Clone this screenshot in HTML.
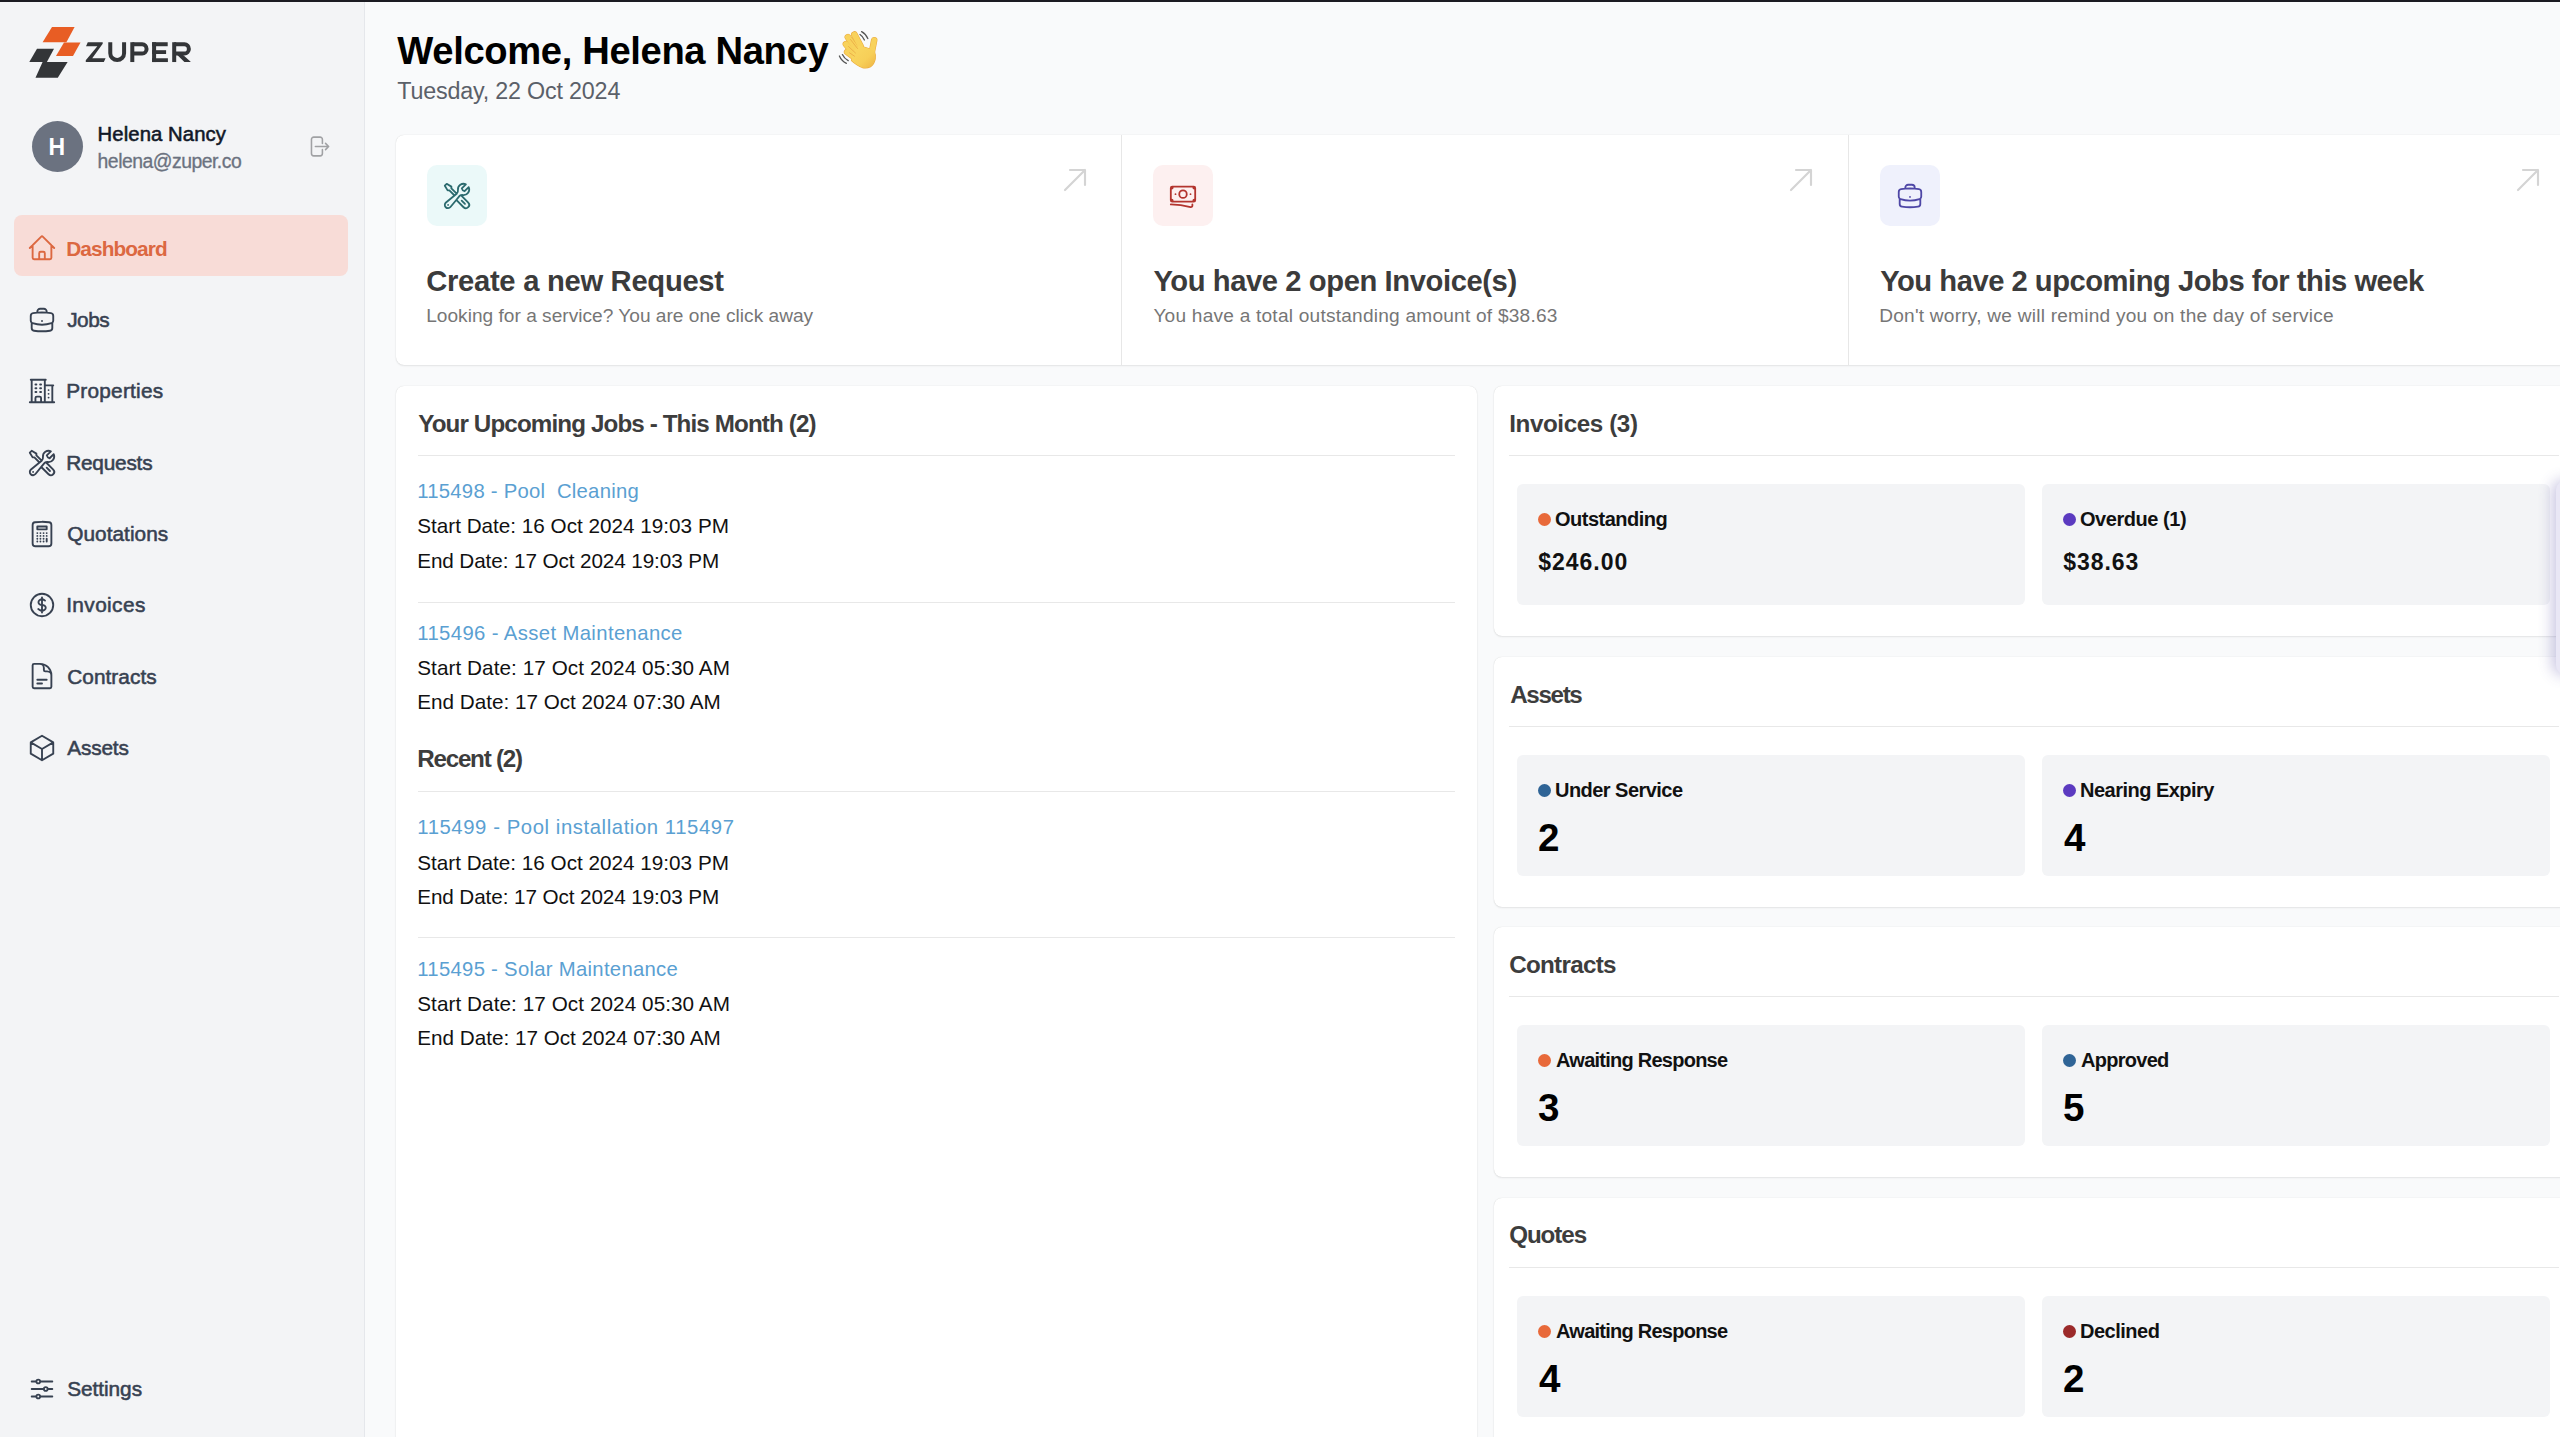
<!DOCTYPE html>
<html><head><meta charset="utf-8"><style>
html,body{margin:0;padding:0;width:2560px;height:1437px;overflow:hidden;background:#f9fafb}
.t{position:absolute;white-space:pre;line-height:1;font-family:"Liberation Sans", sans-serif}
svg{display:block}
</style></head><body>
<div style="position:absolute;left:0px;top:0px;width:2560px;height:2px;background:#1b1b22"></div>
<div style="position:absolute;left:0px;top:2px;width:364px;height:1435px;background:#f3f4f6"></div>
<div style="position:absolute;left:364px;top:2px;width:1px;height:1435px;background:#e5e7eb"></div>
<svg style="position:absolute;left:0;top:0" width="200" height="90" viewBox="0 0 200 90">
<polygon points="52,27 74.6,27 66.4,42.2 42.6,42.2" fill="#e85d24"/>
<polygon points="64,42.6 80.5,42.6 73,55.9 56,55.9" fill="#e85d24"/>
<polygon points="37,48.8 54,48.8 46.9,62 29.3,62" fill="#333538"/>
<polygon points="42.6,62 67.6,62 57.8,77.7 35.5,77.7" fill="#333538"/>
</svg>
<svg style="position:absolute;left:0;top:0" width="200" height="90" viewBox="0 0 200 90">
<g fill="#333538">
<polygon points="87.79,42.23 102.7,42.23 102.7,43.79 92.24,58.26 105.6,58.26 103.82,62.04 85.78,62.04 85.78,60.26 97.36,46.24 86.01,46.24"/>
<rect x="130.3" y="42.23" width="4" height="19.81"/>
<rect x="152.1" y="42.23" width="4" height="19.81"/>
<rect x="152.1" y="42.23" width="15.6" height="4"/>
<rect x="152.1" y="50.2" width="14" height="3.8"/>
<rect x="152.1" y="58.26" width="15.8" height="3.78"/>
<rect x="172.2" y="42.23" width="4" height="19.81"/>
<polygon points="176.8,54.5 182.6,54.5 190.9,62.04 184.4,62.04"/>
</g>
<g fill="none" stroke="#333538" stroke-width="4">
<path d="M110.27 42.23 V53.14 A6.9 6.9 0 0 0 124.08 53.14 V42.23"/>
<path d="M132.3 44.23 H142.1 A4.69 4.69 0 0 1 142.1 53.6 H132.3"/>
<path d="M174.2 44.23 H184.4 A4.69 4.69 0 0 1 184.4 53.6 H174.2"/>
</g></svg>
<div style="position:absolute;left:32px;top:121px;width:51px;height:51px;background:#6b7280;border-radius:50%"></div>
<div class="t" style="left:48.40px;top:136.00px;font-size:23px;font-weight:700;color:#fff;letter-spacing:0.000px;">H</div>
<div class="t" style="left:97.60px;top:124.00px;font-size:20.3px;font-weight:400;color:#111827;letter-spacing:0.082px;-webkit-text-stroke:0.55px currentColor;">Helena Nancy</div>
<div class="t" style="left:97.60px;top:152.00px;font-size:19.4px;font-weight:400;color:#6b7280;letter-spacing:-0.507px;-webkit-text-stroke:0.3px currentColor;">helena@zuper.co</div>
<svg style="position:absolute;left:305.9px;top:133.8px;" width="25" height="25" viewBox="0 0 24 24" fill="none" stroke="#a0a1a4" stroke-width="1.5" stroke-linecap="round" stroke-linejoin="round"><path d="M15.75 9V5.25A2.25 2.25 0 0 0 13.5 3h-6a2.25 2.25 0 0 0-2.25 2.25v13.5A2.25 2.25 0 0 0 7.5 21h6a2.25 2.25 0 0 0 2.25-2.25V15m3 0 3-3m0 0-3-3m3 3H9"/></svg>
<div style="position:absolute;left:14px;top:215px;width:334px;height:61px;background:#f8dcd7;border-radius:8px"></div>
<svg style="position:absolute;left:27px;top:233.3px;" width="30" height="30" viewBox="0 0 24 24" fill="none" stroke="#dc6841" stroke-width="1.5" stroke-linecap="round" stroke-linejoin="round"><path d="m2.25 12 8.954-8.955c.44-.439 1.152-.439 1.591 0L21.75 12M4.5 9.75v10.125c0 .621.504 1.125 1.125 1.125H9.75v-4.875c0-.621.504-1.125 1.125-1.125h2.25c.621 0 1.125.504 1.125 1.125V21h4.125c.621 0 1.125-.504 1.125-1.125V9.75M8.25 21h8.25"/></svg>
<div class="t" style="left:66.20px;top:239.00px;font-size:20.8px;font-weight:700;color:#dc6841;letter-spacing:-0.900px;">Dashboard</div>
<svg style="position:absolute;left:27px;top:304.9px;" width="30" height="30" viewBox="0 0 24 24" fill="none" stroke="#374151" stroke-width="1.5" stroke-linecap="round" stroke-linejoin="round"><path d="M20.25 14.15v4.25c0 1.094-.787 2.036-1.872 2.18-2.087.277-4.216.42-6.378.42s-4.291-.143-6.378-.42c-1.085-.144-1.872-1.086-1.872-2.18v-4.25m16.5 0a2.18 2.18 0 0 0 .75-1.661V8.706c0-1.081-.768-2.015-1.837-2.175a48.114 48.114 0 0 0-3.413-.387m4.5 8.006c-.194.165-.42.295-.673.38A23.978 23.978 0 0 1 12 15.75c-2.648 0-5.195-.429-7.577-1.22a2.016 2.016 0 0 1-.673-.38m0 0A2.18 2.18 0 0 1 3 12.489V8.706c0-1.081.768-2.015 1.837-2.175a48.111 48.111 0 0 1 3.413-.387m7.5 0V5.25A2.25 2.25 0 0 0 13.5 3h-3a2.25 2.25 0 0 0-2.25 2.25v.894m7.5 0a48.667 48.667 0 0 0-7.5 0M12 12.75h.008v.008H12v-.008Z"/></svg>
<div class="t" style="left:67.20px;top:310.00px;font-size:20.8px;font-weight:400;color:#374151;letter-spacing:-0.467px;-webkit-text-stroke:0.55px currentColor;">Jobs</div>
<svg style="position:absolute;left:27px;top:376.2px;" width="30" height="30" viewBox="0 0 24 24" fill="none" stroke="#374151" stroke-width="1.5" stroke-linecap="round" stroke-linejoin="round"><path d="M2.25 21h19.5m-18-18v18m10.5-18v18m6-13.5V21M6.75 6.75h.75m-.75 3h.75m-.75 3h.75m3-6h.75m-.75 3h.75m-.75 3h.75M6.75 21v-3.375c0-.621.504-1.125 1.125-1.125h2.25c.621 0 1.125.504 1.125 1.125V21M3 3h12m-.75 4.5H21m-3.75 3.75h.008v.008h-.008v-.008Zm0 3h.008v.008h-.008v-.008Zm0 3h.008v.008h-.008v-.008Z"/></svg>
<div class="t" style="left:66.20px;top:381.00px;font-size:20.8px;font-weight:400;color:#374151;letter-spacing:0.244px;-webkit-text-stroke:0.55px currentColor;">Properties</div>
<svg style="position:absolute;left:27px;top:447.5px;" width="30" height="30" viewBox="0 0 24 24" fill="none" stroke="#374151" stroke-width="1.5" stroke-linecap="round" stroke-linejoin="round"><path d="M11.42 15.17 17.25 21A2.652 2.652 0 0 0 21 17.25l-5.877-5.877M11.42 15.17l2.496-3.03c.317-.384.74-.626 1.208-.766M11.42 15.17l-4.655 5.653a2.548 2.548 0 1 1-3.586-3.586l6.837-5.63m5.108-.233c.55-.164 1.163-.188 1.743-.14a4.5 4.5 0 0 0 4.486-6.336l-3.276 3.277a3.004 3.004 0 0 1-2.25-2.25l3.276-3.276a4.5 4.5 0 0 0-6.336 4.486c.091 1.076-.071 2.264-.904 2.95l-.102.085m-1.745 1.437L5.909 7.5H4.5L2.25 3.75l1.5-1.5L7.5 4.5v1.409l4.26 4.26m-1.745 1.437 1.745-1.437m6.615 8.206L15.75 15.75M4.867 19.125h.008v.008h-.008v-.008Z"/></svg>
<div class="t" style="left:66.20px;top:453.00px;font-size:20.8px;font-weight:400;color:#374151;letter-spacing:-0.214px;-webkit-text-stroke:0.55px currentColor;">Requests</div>
<svg style="position:absolute;left:27px;top:518.8px;" width="30" height="30" viewBox="0 0 24 24" fill="none" stroke="#374151" stroke-width="1.5" stroke-linecap="round" stroke-linejoin="round"><path d="M15.75 15.75V18m-7.5-6.75h.008v.008H8.25v-.008Zm0 2.25h.008v.008H8.25V13.5Zm0 2.25h.008v.008H8.25v-.008Zm0 2.25h.008v.008H8.25V18Zm2.498-6.75h.007v.008h-.007v-.008Zm0 2.25h.007v.008h-.007V13.5Zm0 2.25h.007v.008h-.007v-.008Zm0 2.25h.007v.008h-.007V18Zm2.504-6.75h.008v.008h-.008v-.008Zm0 2.25h.008v.008h-.008V13.5Zm0 2.25h.008v.008h-.008v-.008Zm0 2.25h.008v.008h-.008V18Zm2.498-6.75h.008v.008h-.008v-.008Zm0 2.25h.008v.008h-.008V13.5ZM8.25 6h7.5v2.25h-7.5V6ZM12 2.25c-1.892 0-3.758.11-5.593.322C5.307 2.7 4.5 3.65 4.5 4.757V19.5a2.25 2.25 0 0 0 2.25 2.25h10.5a2.25 2.25 0 0 0 2.25-2.25V4.757c0-1.108-.806-2.057-1.907-2.185A48.507 48.507 0 0 0 12 2.25Z"/></svg>
<div class="t" style="left:67.20px;top:524.00px;font-size:20.8px;font-weight:400;color:#374151;letter-spacing:0.044px;-webkit-text-stroke:0.55px currentColor;">Quotations</div>
<svg style="position:absolute;left:27px;top:590.1px;" width="30" height="30" viewBox="0 0 24 24" fill="none" stroke="#374151" stroke-width="1.5" stroke-linecap="round" stroke-linejoin="round"><path d="M12 6v12m-3-2.818.879.659c1.171.879 3.07.879 4.242 0 1.172-.879 1.172-2.303 0-3.182C13.536 12.219 12.768 12 12 12c-.725 0-1.45-.22-2.003-.659-1.106-.879-1.106-2.303 0-3.182s2.9-.879 4.006 0l.415.33M21 12a9 9 0 1 1-18 0 9 9 0 0 1 18 0Z"/></svg>
<div class="t" style="left:66.20px;top:595.00px;font-size:20.8px;font-weight:400;color:#374151;letter-spacing:0.400px;-webkit-text-stroke:0.55px currentColor;">Invoices</div>
<svg style="position:absolute;left:27px;top:661.4px;" width="30" height="30" viewBox="0 0 24 24" fill="none" stroke="#374151" stroke-width="1.5" stroke-linecap="round" stroke-linejoin="round"><path d="M19.5 14.25v-2.625a3.375 3.375 0 0 0-3.375-3.375h-1.5A1.125 1.125 0 0 1 13.5 7.125v-1.5a3.375 3.375 0 0 0-3.375-3.375H8.25m0 12.75h7.5m-7.5 3H12M10.5 2.25H5.625c-.621 0-1.125.504-1.125 1.125v17.25c0 .621.504 1.125 1.125 1.125h12.75c.621 0 1.125-.504 1.125-1.125V11.25a9 9 0 0 0-9-9Z"/></svg>
<div class="t" style="left:67.20px;top:667.00px;font-size:20.8px;font-weight:400;color:#374151;letter-spacing:0.062px;-webkit-text-stroke:0.55px currentColor;">Contracts</div>
<svg style="position:absolute;left:27px;top:732.7px;" width="30" height="30" viewBox="0 0 24 24" fill="none" stroke="#374151" stroke-width="1.5" stroke-linecap="round" stroke-linejoin="round"><path d="m21 7.5-9-5.25L3 7.5m18 0-9 5.25m9-5.25v9l-9 5.25M3 7.5l9 5.25M3 7.5v9l9 5.25m0-9v9"/></svg>
<div class="t" style="left:67.20px;top:738.00px;font-size:20.8px;font-weight:400;color:#374151;letter-spacing:-0.140px;-webkit-text-stroke:0.55px currentColor;">Assets</div>
<svg style="position:absolute;left:27px;top:1374px;" width="30" height="30" viewBox="0 0 24 24" fill="none" stroke="#374151" stroke-width="1.5" stroke-linecap="round" stroke-linejoin="round"><path d="M10.5 6h9.75M10.5 6a1.5 1.5 0 1 1-3 0m3 0a1.5 1.5 0 1 0-3 0M3.75 6H7.5m3 12h9.75m-9.75 0a1.5 1.5 0 0 1-3 0m3 0a1.5 1.5 0 0 0-3 0m-3.75 0H7.5m9-6h3.75m-3.75 0a1.5 1.5 0 0 1-3 0m3 0a1.5 1.5 0 0 0-3 0m-9.75 0h9.75"/></svg>
<div class="t" style="left:67.20px;top:1379.00px;font-size:20.8px;font-weight:400;color:#374151;letter-spacing:-0.043px;-webkit-text-stroke:0.55px currentColor;">Settings</div>
<div style="position:absolute;left:365px;top:2px;width:2195px;height:1435px;background:#f9fafb"></div>
<div class="t" style="left:397.30px;top:32.00px;font-size:38.2px;font-weight:700;color:#000;letter-spacing:-0.365px;">Welcome, Helena Nancy</div>
<svg style="position:absolute;left:826px;top:24px" width="60" height="52" viewBox="0 0 60 52">
<defs><linearGradient id="hg" x1="0" y1="0" x2="1" y2="1"><stop offset="0" stop-color="#f9d862"/><stop offset="0.6" stop-color="#f7cf58"/><stop offset="1" stop-color="#eeb444"/></linearGradient></defs>
<g stroke="#eaa93e" stroke-linecap="round"><line x1="34.6" y1="22.3" x2="28.4" y2="10.6" stroke-width="6.699999999999999"/><line x1="31.2" y1="26.5" x2="21.9" y2="13.2" stroke-width="6.699999999999999"/><line x1="29.2" y1="31.4" x2="20.0" y2="20.2" stroke-width="6.699999999999999"/><line x1="28.3" y1="33.5" x2="21.0" y2="28.0" stroke-width="6.300000000000001"/><line x1="45.6" y1="29.5" x2="48.2" y2="16.2" stroke-width="6.5"/></g>
<path d="M33,21.5 L44,25 L48.3,27 Q49.8,31 49.2,35 Q48.4,40 44.5,42.8 Q40.5,44.6 36.5,43.6 Q31.5,41.8 25.5,36.5 L27,28 Z" fill="#f7cf58" stroke="#eaa93e" stroke-width="1.1"/>
<g stroke="#f8d25c" stroke-linecap="round"><line x1="34.6" y1="22.3" x2="28.4" y2="10.6" stroke-width="5.6"/><line x1="31.2" y1="26.5" x2="21.9" y2="13.2" stroke-width="5.6"/><line x1="29.2" y1="31.4" x2="20.0" y2="20.2" stroke-width="5.6"/><line x1="28.3" y1="33.5" x2="21.0" y2="28.0" stroke-width="5.2"/><line x1="45.6" y1="29.5" x2="48.2" y2="16.2" stroke-width="5.4"/></g>
<path d="M33,21.5 L44,25 L48.3,27 Q49.8,31 49.2,35 Q48.4,40 44.5,42.8 Q40.5,44.6 36.5,43.6 Q31.5,41.8 25.5,36.5 L27,28 Z" fill="url(#hg)"/>
<g stroke="#e9a842" stroke-width="0.8" fill="none" stroke-linecap="round">
<path d="M24.5,15.5 L31.5,24.5"/><path d="M22.5,22.5 L29.5,29"/><path d="M23.5,28.8 L28.5,32.2"/>
</g>
<g fill="none" stroke="#555" stroke-width="1.3" stroke-linecap="round">
<path d="M35.6,7.6 Q39.8,9.8 41.8,14.6"/><path d="M34,10.5 Q37,12.4 38.4,16"/>
<path d="M13.4,32 Q15.4,36.8 20.4,39.3"/><path d="M16.4,30.6 Q18.2,34.6 22.2,36.6"/>
</g></svg>
<div class="t" style="left:397.30px;top:80.00px;font-size:23.3px;font-weight:400;color:#5b6069;letter-spacing:-0.189px;">Tuesday, 22 Oct 2024</div>
<div style="position:absolute;left:396px;top:135px;width:2200px;height:230px;background:#fff;border-radius:8px;box-shadow:0 1px 2px rgba(0,0,0,0.08), 0 0 1px rgba(0,0,0,0.16)"></div>
<div style="position:absolute;left:1121px;top:135px;width:1px;height:230px;background:#e7e7e7"></div>
<div style="position:absolute;left:1848px;top:135px;width:1px;height:230px;background:#e7e7e7"></div>
<div style="position:absolute;left:427px;top:165px;width:60px;height:61px;background:#ebf9f9;border-radius:10px"></div>
<svg style="position:absolute;left:442px;top:181px;" width="30" height="30" viewBox="0 0 24 24" fill="none" stroke="#2b6a6e" stroke-width="1.45" stroke-linecap="round" stroke-linejoin="round"><path d="M11.42 15.17 17.25 21A2.652 2.652 0 0 0 21 17.25l-5.877-5.877M11.42 15.17l2.496-3.03c.317-.384.74-.626 1.208-.766M11.42 15.17l-4.655 5.653a2.548 2.548 0 1 1-3.586-3.586l6.837-5.63m5.108-.233c.55-.164 1.163-.188 1.743-.14a4.5 4.5 0 0 0 4.486-6.336l-3.276 3.277a3.004 3.004 0 0 1-2.25-2.25l3.276-3.276a4.5 4.5 0 0 0-6.336 4.486c.091 1.076-.071 2.264-.904 2.95l-.102.085m-1.745 1.437L5.909 7.5H4.5L2.25 3.75l1.5-1.5L7.5 4.5v1.409l4.26 4.26m-1.745 1.437 1.745-1.437m6.615 8.206L15.75 15.75M4.867 19.125h.008v.008h-.008v-.008Z"/></svg>
<div class="t" style="left:426.20px;top:267.00px;font-size:29.2px;font-weight:700;color:#3b3b3b;letter-spacing:-0.289px;">Create a new Request</div>
<div class="t" style="left:426.20px;top:306.00px;font-size:19.1px;font-weight:400;color:#767676;letter-spacing:0.014px;">Looking for a service? You are one click away</div>
<svg style="position:absolute;left:1059px;top:164.4px;" width="32" height="32" viewBox="0 0 24 24" fill="none" stroke="#d4d4d4" stroke-width="1.6" stroke-linecap="round" stroke-linejoin="round"><path d="m4.5 19.5 15-15m0 0H8.25m11.25 0v11.25"/></svg>
<div style="position:absolute;left:1153px;top:165px;width:60px;height:61px;background:#fdf0f0;border-radius:10px"></div>
<svg style="position:absolute;left:1168px;top:181px;" width="30" height="30" viewBox="0 0 24 24" fill="none" stroke="#b3342e" stroke-width="1.45" stroke-linecap="round" stroke-linejoin="round"><path d="M2.25 18.75a60.07 60.07 0 0 1 15.797 2.101c.727.198 1.453-.342 1.453-1.096V18.75M3.75 4.5v.75A.75.75 0 0 1 3 6h-.75m0 0v-.375c0-.621.504-1.125 1.125-1.125H20.25M2.25 6v9m18-10.5v.75c0 .414.336.75.75.75h.75m-1.5-1.5h.375c.621 0 1.125.504 1.125 1.125v9.75c0 .621-.504 1.125-1.125 1.125h-.375m1.5-1.5H21a.75.75 0 0 0-.75.75v.75m0 0H3.75m0 0h-.375a1.125 1.125 0 0 1-1.125-1.125V15m1.5 1.5v-.75A.75.75 0 0 0 3 15h-.75M15 10.5a3 3 0 1 1-6 0 3 3 0 0 1 6 0Zm3 0h.008v.008H18V10.5Zm-12 0h.008v.008H6V10.5Z"/></svg>
<div class="t" style="left:1153.40px;top:267.00px;font-size:29.2px;font-weight:700;color:#3b3b3b;letter-spacing:-0.416px;">You have 2 open Invoice(s)</div>
<div class="t" style="left:1153.40px;top:306.00px;font-size:19.1px;font-weight:400;color:#767676;letter-spacing:0.223px;">You have a total outstanding amount of $38.63</div>
<svg style="position:absolute;left:1785px;top:164.4px;" width="32" height="32" viewBox="0 0 24 24" fill="none" stroke="#d4d4d4" stroke-width="1.6" stroke-linecap="round" stroke-linejoin="round"><path d="m4.5 19.5 15-15m0 0H8.25m11.25 0v11.25"/></svg>
<div style="position:absolute;left:1880px;top:165px;width:60px;height:61px;background:#eff1fc;border-radius:10px"></div>
<svg style="position:absolute;left:1895px;top:181px;" width="30" height="30" viewBox="0 0 24 24" fill="none" stroke="#4e47a6" stroke-width="1.45" stroke-linecap="round" stroke-linejoin="round"><path d="M20.25 14.15v4.25c0 1.094-.787 2.036-1.872 2.18-2.087.277-4.216.42-6.378.42s-4.291-.143-6.378-.42c-1.085-.144-1.872-1.086-1.872-2.18v-4.25m16.5 0a2.18 2.18 0 0 0 .75-1.661V8.706c0-1.081-.768-2.015-1.837-2.175a48.114 48.114 0 0 0-3.413-.387m4.5 8.006c-.194.165-.42.295-.673.38A23.978 23.978 0 0 1 12 15.75c-2.648 0-5.195-.429-7.577-1.22a2.016 2.016 0 0 1-.673-.38m0 0A2.18 2.18 0 0 1 3 12.489V8.706c0-1.081.768-2.015 1.837-2.175a48.111 48.111 0 0 1 3.413-.387m7.5 0V5.25A2.25 2.25 0 0 0 13.5 3h-3a2.25 2.25 0 0 0-2.25 2.25v.894m7.5 0a48.667 48.667 0 0 0-7.5 0M12 12.75h.008v.008H12v-.008Z"/></svg>
<div class="t" style="left:1880.20px;top:267.00px;font-size:29.2px;font-weight:700;color:#3b3b3b;letter-spacing:-0.489px;">You have 2 upcoming Jobs for this week</div>
<div class="t" style="left:1879.20px;top:306.00px;font-size:19.1px;font-weight:400;color:#767676;letter-spacing:0.227px;">Don't worry, we will remind you on the day of service</div>
<svg style="position:absolute;left:2512px;top:164.4px;" width="32" height="32" viewBox="0 0 24 24" fill="none" stroke="#d4d4d4" stroke-width="1.6" stroke-linecap="round" stroke-linejoin="round"><path d="m4.5 19.5 15-15m0 0H8.25m11.25 0v11.25"/></svg>
<div style="position:absolute;left:396px;top:386px;width:1081px;height:1100px;background:#fff;border-radius:8px;box-shadow:0 1px 2px rgba(0,0,0,0.08), 0 0 1px rgba(0,0,0,0.16)"></div>
<div class="t" style="left:418.20px;top:412.00px;font-size:24.2px;font-weight:700;color:#3d3d3d;letter-spacing:-0.876px;">Your Upcoming Jobs - This Month (2)</div>
<div style="position:absolute;left:418px;top:455px;width:1037px;height:1px;background:#e8e8e8"></div>
<div class="t" style="left:417.30px;top:481.00px;font-size:20.3px;font-weight:400;color:#5aa0d2;letter-spacing:0.241px;">115498 - Pool&nbsp; Cleaning</div>
<div class="t" style="left:417.20px;top:516.00px;font-size:20.7px;font-weight:400;color:#111;letter-spacing:0.003px;">Start Date: 16 Oct 2024 19:03 PM</div>
<div class="t" style="left:417.20px;top:551.00px;font-size:20.7px;font-weight:400;color:#111;letter-spacing:-0.097px;">End Date: 17 Oct 2024 19:03 PM</div>
<div style="position:absolute;left:418px;top:602px;width:1037px;height:1px;background:#e8e8e8"></div>
<div class="t" style="left:417.30px;top:623.00px;font-size:20.3px;font-weight:400;color:#5aa0d2;letter-spacing:0.380px;">115496 - Asset Maintenance</div>
<div class="t" style="left:417.20px;top:658.00px;font-size:20.7px;font-weight:400;color:#111;letter-spacing:0.074px;">Start Date: 17 Oct 2024 05:30 AM</div>
<div class="t" style="left:417.20px;top:692.00px;font-size:20.7px;font-weight:400;color:#111;letter-spacing:-0.003px;">End Date: 17 Oct 2024 07:30 AM</div>
<div class="t" style="left:417.20px;top:747.00px;font-size:24.2px;font-weight:700;color:#3d3d3d;letter-spacing:-1.222px;">Recent (2)</div>
<div style="position:absolute;left:418px;top:791px;width:1037px;height:1px;background:#e8e8e8"></div>
<div class="t" style="left:417.30px;top:817.00px;font-size:20.3px;font-weight:400;color:#5aa0d2;letter-spacing:0.581px;">115499 - Pool installation 115497</div>
<div class="t" style="left:417.20px;top:853.00px;font-size:20.7px;font-weight:400;color:#111;letter-spacing:0.003px;">Start Date: 16 Oct 2024 19:03 PM</div>
<div class="t" style="left:417.20px;top:887.00px;font-size:20.7px;font-weight:400;color:#111;letter-spacing:-0.097px;">End Date: 17 Oct 2024 19:03 PM</div>
<div style="position:absolute;left:418px;top:937px;width:1037px;height:1px;background:#e8e8e8"></div>
<div class="t" style="left:417.30px;top:959.00px;font-size:20.3px;font-weight:400;color:#5aa0d2;letter-spacing:0.288px;">115495 - Solar Maintenance</div>
<div class="t" style="left:417.20px;top:994.00px;font-size:20.7px;font-weight:400;color:#111;letter-spacing:0.074px;">Start Date: 17 Oct 2024 05:30 AM</div>
<div class="t" style="left:417.20px;top:1028.00px;font-size:20.7px;font-weight:400;color:#111;letter-spacing:-0.003px;">End Date: 17 Oct 2024 07:30 AM</div>
<div style="position:absolute;left:1494px;top:386.3px;width:1090px;height:250px;background:#fff;border-radius:8px;box-shadow:0 1px 2px rgba(0,0,0,0.08), 0 0 1px rgba(0,0,0,0.16)"></div>
<div class="t" style="left:1509.20px;top:412.00px;font-size:24.2px;font-weight:700;color:#3d3d3d;letter-spacing:-0.391px;">Invoices (3)</div>
<div style="position:absolute;left:1509px;top:455.3px;width:1050px;height:1px;background:#e8e8e8"></div>
<div style="position:absolute;left:1517px;top:484.3px;width:508px;height:121px;background:#f3f4f6;border-radius:6px"></div>
<div style="position:absolute;left:1537.5px;top:513.3px;width:13px;height:13px;background:#e8693a;border-radius:50%"></div>
<div class="t" style="left:1555.00px;top:509.00px;font-size:20px;font-weight:700;color:#111;letter-spacing:-0.500px;">Outstanding</div>
<div class="t" style="left:1538.20px;top:551.00px;font-size:23px;font-weight:700;color:#111;letter-spacing:0.983px;">$246.00</div>
<div style="position:absolute;left:2042px;top:484.3px;width:508px;height:121px;background:#f3f4f6;border-radius:6px"></div>
<div style="position:absolute;left:2062.5px;top:513.3px;width:13px;height:13px;background:#5b3ac0;border-radius:50%"></div>
<div class="t" style="left:2080.00px;top:509.00px;font-size:20px;font-weight:700;color:#111;letter-spacing:-0.450px;">Overdue (1)</div>
<div class="t" style="left:2063.20px;top:551.00px;font-size:23px;font-weight:700;color:#111;letter-spacing:0.940px;">$38.63</div>
<div style="position:absolute;left:1494px;top:656.8px;width:1090px;height:250px;background:#fff;border-radius:8px;box-shadow:0 1px 2px rgba(0,0,0,0.08), 0 0 1px rgba(0,0,0,0.16)"></div>
<div class="t" style="left:1510.20px;top:683.00px;font-size:24.2px;font-weight:700;color:#3d3d3d;letter-spacing:-1.340px;">Assets</div>
<div style="position:absolute;left:1509px;top:725.8px;width:1050px;height:1px;background:#e8e8e8"></div>
<div style="position:absolute;left:1517px;top:754.8px;width:508px;height:121px;background:#f3f4f6;border-radius:6px"></div>
<div style="position:absolute;left:1537.5px;top:783.8px;width:13px;height:13px;background:#2f6496;border-radius:50%"></div>
<div class="t" style="left:1555.00px;top:780.00px;font-size:20px;font-weight:700;color:#111;letter-spacing:-0.542px;">Under Service</div>
<div class="t" style="left:1537.90px;top:819.00px;font-size:38.6px;font-weight:700;color:#000;letter-spacing:0.000px;">2</div>
<div style="position:absolute;left:2042px;top:754.8px;width:508px;height:121px;background:#f3f4f6;border-radius:6px"></div>
<div style="position:absolute;left:2062.5px;top:783.8px;width:13px;height:13px;background:#5b3ac0;border-radius:50%"></div>
<div class="t" style="left:2080.00px;top:780.00px;font-size:20px;font-weight:700;color:#111;letter-spacing:-0.515px;">Nearing Expiry</div>
<div class="t" style="left:2063.90px;top:819.00px;font-size:38.6px;font-weight:700;color:#000;letter-spacing:0.000px;">4</div>
<div style="position:absolute;left:1494px;top:927.3px;width:1090px;height:250px;background:#fff;border-radius:8px;box-shadow:0 1px 2px rgba(0,0,0,0.08), 0 0 1px rgba(0,0,0,0.16)"></div>
<div class="t" style="left:1509.20px;top:953.00px;font-size:24.2px;font-weight:700;color:#3d3d3d;letter-spacing:-0.700px;">Contracts</div>
<div style="position:absolute;left:1509px;top:996.3px;width:1050px;height:1px;background:#e8e8e8"></div>
<div style="position:absolute;left:1517px;top:1025.3px;width:508px;height:121px;background:#f3f4f6;border-radius:6px"></div>
<div style="position:absolute;left:1537.5px;top:1054.3px;width:13px;height:13px;background:#e8693a;border-radius:50%"></div>
<div class="t" style="left:1556.00px;top:1050.00px;font-size:20px;font-weight:700;color:#111;letter-spacing:-0.750px;">Awaiting Response</div>
<div class="t" style="left:1537.90px;top:1089.00px;font-size:38.6px;font-weight:700;color:#000;letter-spacing:0.000px;">3</div>
<div style="position:absolute;left:2042px;top:1025.3px;width:508px;height:121px;background:#f3f4f6;border-radius:6px"></div>
<div style="position:absolute;left:2062.5px;top:1054.3px;width:13px;height:13px;background:#2f6496;border-radius:50%"></div>
<div class="t" style="left:2081.00px;top:1050.00px;font-size:20px;font-weight:700;color:#111;letter-spacing:-0.729px;">Approved</div>
<div class="t" style="left:2062.90px;top:1089.00px;font-size:38.6px;font-weight:700;color:#000;letter-spacing:0.000px;">5</div>
<div style="position:absolute;left:1494px;top:1197.8px;width:1090px;height:250px;background:#fff;border-radius:8px;box-shadow:0 1px 2px rgba(0,0,0,0.08), 0 0 1px rgba(0,0,0,0.16)"></div>
<div class="t" style="left:1509.20px;top:1223.00px;font-size:24.2px;font-weight:700;color:#3d3d3d;letter-spacing:-1.080px;">Quotes</div>
<div style="position:absolute;left:1509px;top:1266.8px;width:1050px;height:1px;background:#e8e8e8"></div>
<div style="position:absolute;left:1517px;top:1295.8px;width:508px;height:121px;background:#f3f4f6;border-radius:6px"></div>
<div style="position:absolute;left:1537.5px;top:1324.8px;width:13px;height:13px;background:#e8693a;border-radius:50%"></div>
<div class="t" style="left:1556.00px;top:1321.00px;font-size:20px;font-weight:700;color:#111;letter-spacing:-0.750px;">Awaiting Response</div>
<div class="t" style="left:1538.90px;top:1360.00px;font-size:38.6px;font-weight:700;color:#000;letter-spacing:0.000px;">4</div>
<div style="position:absolute;left:2042px;top:1295.8px;width:508px;height:121px;background:#f3f4f6;border-radius:6px"></div>
<div style="position:absolute;left:2062.5px;top:1324.8px;width:13px;height:13px;background:#9b2a2a;border-radius:50%"></div>
<div class="t" style="left:2080.00px;top:1321.00px;font-size:20px;font-weight:700;color:#111;letter-spacing:-0.500px;">Declined</div>
<div class="t" style="left:2062.90px;top:1360.00px;font-size:38.6px;font-weight:700;color:#000;letter-spacing:0.000px;">2</div>
<div style="position:absolute;left:2556px;top:480px;width:40px;height:195px;background:#e9e7f5;border-radius:10px;box-shadow:-4px 0 14px rgba(80,70,160,0.30)"></div>
</body></html>
